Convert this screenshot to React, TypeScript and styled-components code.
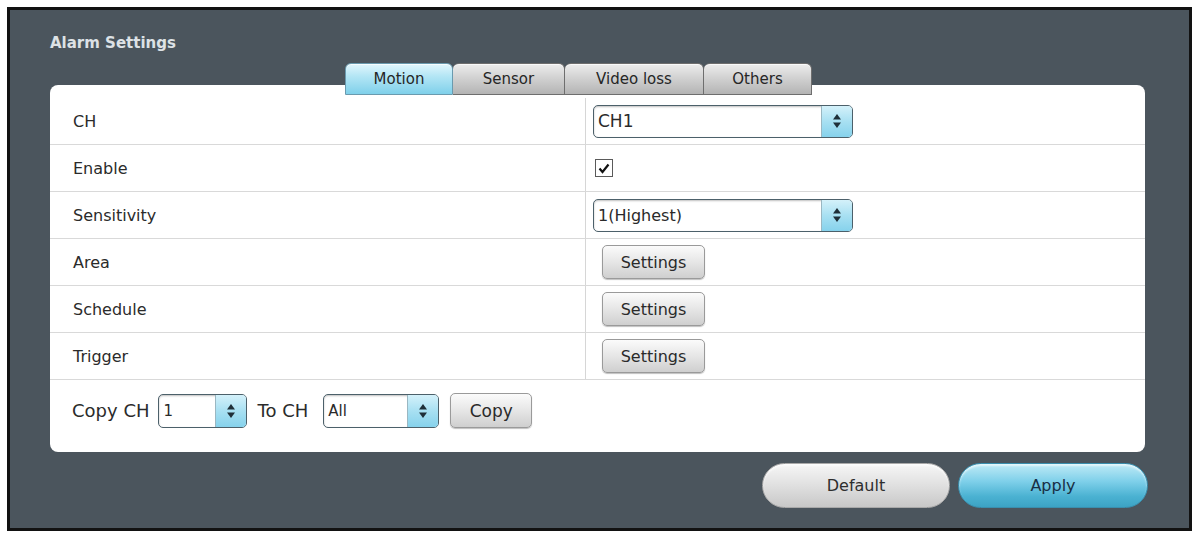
import React from "react";
import styled, { createGlobalStyle } from "styled-components";

const GlobalStyle = createGlobalStyle`
  html, body {
    margin: 0;
    padding: 0;
    background: #ffffff;
  }
  body {
    font-family: "DejaVu Sans", "Liberation Sans", Arial, sans-serif;
  }
`;

const Frame = styled.div`
  box-sizing: border-box;
  margin: 7px 0 0 7px;
  width: 1185px;
  height: 524px;
  border: 3px solid #121212;
  background: #4b555d;
  padding: 23px 0 0 40px;
  display: flex;
  flex-direction: column;
`;

const Title = styled.div`
  font-weight: bold;
  font-size: 15px;
  line-height: 20px;
  color: #dde2e6;
  margin-bottom: 10px;
`;

const TabBar = styled.div`
  display: flex;
  margin-left: 295px;
  margin-bottom: -10px;
  position: relative;
  z-index: 1;
`;

const Tab = styled.div<{ $active?: boolean; $w: number }>`
  box-sizing: border-box;
  width: ${(p) => p.$w}px;
  height: 32px;
  display: flex;
  align-items: center;
  justify-content: center;
  font-size: 15px;
  color: #262626;
  border: 1px solid ${(p) => (p.$active ? "#6a9aae" : "#6e6e6e")};
  border-left-width: ${(p) => (p.$active ? 1 : 0)}px;
  border-radius: 6px 6px 0 0;
  background: ${(p) =>
    p.$active
      ? "linear-gradient(#e2f6fc 0%, #b4e6f5 40%, #7fd0ea 100%)"
      : "linear-gradient(#ededed 0%, #d2d2d2 45%, #b4b4b4 100%)"};
  box-shadow: inset 0 1px 0 rgba(255, 255, 255, 0.7);
`;

const Panel = styled.div`
  box-sizing: border-box;
  width: 1095px;
  height: 367px;
  background: #ffffff;
  border-radius: 8px;
  padding-top: 13px;
`;

const Row = styled.div`
  box-sizing: border-box;
  height: 47px;
  display: grid;
  grid-template-columns: 536px 1fr;
  border-bottom: 1px solid #d9d9d9;
`;

const Label = styled.div`
  display: flex;
  align-items: center;
  padding-left: 23px;
  font-size: 16px;
  color: #2b2b2b;
  border-right: 1px solid #d6d6d6;
`;

const Value = styled.div`
  display: flex;
  align-items: center;
  padding-left: 7px;
`;

const SelectBox = styled.div<{ $w: number; $h?: number; $fs?: number }>`
  box-sizing: border-box;
  width: ${(p) => p.$w}px;
  height: ${(p) => p.$h ?? 33}px;
  display: flex;
  border: 1.5px solid #4c606a;
  border-radius: 5px;
  background: #ffffff;
  overflow: hidden;
  box-shadow: inset 0 1px 2px rgba(0, 0, 0, 0.25);
  font-size: ${(p) => p.$fs ?? 16}px;
  color: #2a2a2a;
`;

const SelectText = styled.div`
  flex: 1;
  display: flex;
  align-items: center;
  padding-left: 4px;
`;

const SelectArrow = styled.div`
  width: 30px;
  display: flex;
  align-items: center;
  justify-content: center;
  border-left: 1px solid #9ab7c2;
  background: linear-gradient(#d4f1fa 0%, #a8e0f2 50%, #86d2ec 100%);
`;

const Check = styled.div`
  box-sizing: border-box;
  width: 18px;
  height: 18px;
  margin-left: 2px;
  border: 1.5px solid #5a5a5a;
  background: #fff;
  display: flex;
  align-items: center;
  justify-content: center;
`;

const SmallButton = styled.div<{ $w: number; $h?: number; $fs?: number }>`
  box-sizing: border-box;
  width: ${(p) => p.$w}px;
  height: ${(p) => p.$h ?? 34}px;
  display: flex;
  align-items: center;
  justify-content: center;
  font-size: ${(p) => p.$fs ?? 16}px;
  color: #2a2a2a;
  border: 1px solid #9a9a9a;
  border-radius: 5px;
  background: linear-gradient(#fbfbfb 0%, #e6e6e6 50%, #cfcfcf 100%);
  box-shadow: 0 1px 1px rgba(0, 0, 0, 0.25);
`;

const CopyRow = styled.div`
  display: flex;
  align-items: center;
  padding: 13px 0 0 22px;
  font-size: 18px;
  color: #2b2b2b;
`;

const Gap = styled.span<{ $w: number }>`
  display: inline-block;
  width: ${(p) => p.$w}px;
`;

const Footer = styled.div`
  display: flex;
  gap: 8px;
  margin: 11px 0 0 712px;
`;

const Pill = styled.div<{ $primary?: boolean }>`
  box-sizing: border-box;
  width: ${(p) => (p.$primary ? 190 : 188)}px;
  height: 45px;
  border-radius: 23px;
  display: flex;
  align-items: center;
  justify-content: center;
  font-size: 16px;
  color: ${(p) => (p.$primary ? "#182f45" : "#2e2e2e")};
  border: 1px solid ${(p) => (p.$primary ? "#3a8fae" : "#a9a9a9")};
  background: ${(p) =>
    p.$primary
      ? "linear-gradient(#bfeaf6 0%, #7fd0ea 40%, #4bb2d2 75%, #3ca3c4 100%)"
      : "linear-gradient(#f6f6f6 0%, #e2e2e2 45%, #c8c8c8 100%)"};
  box-shadow: inset 0 2px 2px rgba(255, 255, 255, 0.6);
`;

function Arrows() {
  return (
    <svg width="10" height="16" viewBox="0 0 10 16">
      <path d="M5 1 L9 6.5 L1 6.5 Z" fill="#1f2f38" />
      <path d="M5 15 L9 9.5 L1 9.5 Z" fill="#1f2f38" />
    </svg>
  );
}

function Select(props: { value: string; w: number; h?: number; fs?: number }) {
  return (
    <SelectBox $w={props.w} $h={props.h} $fs={props.fs}>
      <SelectText>{props.value}</SelectText>
      <SelectArrow>
        <Arrows />
      </SelectArrow>
    </SelectBox>
  );
}

const tabs = [
  { name: "Motion", w: 108, active: true },
  { name: "Sensor", w: 112 },
  { name: "Video loss", w: 139 },
  { name: "Others", w: 108 },
];

export default function App() {
  return (
    <>
      <GlobalStyle />
      <Frame>
        <Title>Alarm Settings</Title>
        <TabBar>
          {tabs.map((t) => (
            <Tab key={t.name} $w={t.w} $active={t.active}>
              {t.name}
            </Tab>
          ))}
        </TabBar>
        <Panel>
          <Row>
            <Label>CH</Label>
            <Value>
              <Select value="CH1" w={260} fs={17} />
            </Value>
          </Row>
          <Row>
            <Label>Enable</Label>
            <Value>
              <Check>
                <svg width="12" height="11" viewBox="0 0 12 11">
                  <path
                    d="M1.5 5.5 L4.5 9 L10.5 1.5"
                    fill="none"
                    stroke="#111"
                    strokeWidth="2.2"
                  />
                </svg>
              </Check>
            </Value>
          </Row>
          <Row>
            <Label>Sensitivity</Label>
            <Value>
              <Select value="1(Highest)" w={260} />
            </Value>
          </Row>
          <Row>
            <Label>Area</Label>
            <Value>
              <Gap $w={9} />
              <SmallButton $w={103}>Settings</SmallButton>
            </Value>
          </Row>
          <Row>
            <Label>Schedule</Label>
            <Value>
              <Gap $w={9} />
              <SmallButton $w={103}>Settings</SmallButton>
            </Value>
          </Row>
          <Row>
            <Label>Trigger</Label>
            <Value>
              <Gap $w={9} />
              <SmallButton $w={103}>Settings</SmallButton>
            </Value>
          </Row>
          <CopyRow>
            Copy CH
            <Gap $w={9} />
            <Select value="1" w={89} h={34} fs={15} />
            <Gap $w={10} />
            To CH
            <Gap $w={15} />
            <Select value="All" w={116} h={34} fs={15} />
            <Gap $w={11} />
            <SmallButton $w={82} $h={35} $fs={17}>
              Copy
            </SmallButton>
          </CopyRow>
        </Panel>
        <Footer>
          <Pill>Default</Pill>
          <Pill $primary>Apply</Pill>
        </Footer>
      </Frame>
    </>
  );
}
